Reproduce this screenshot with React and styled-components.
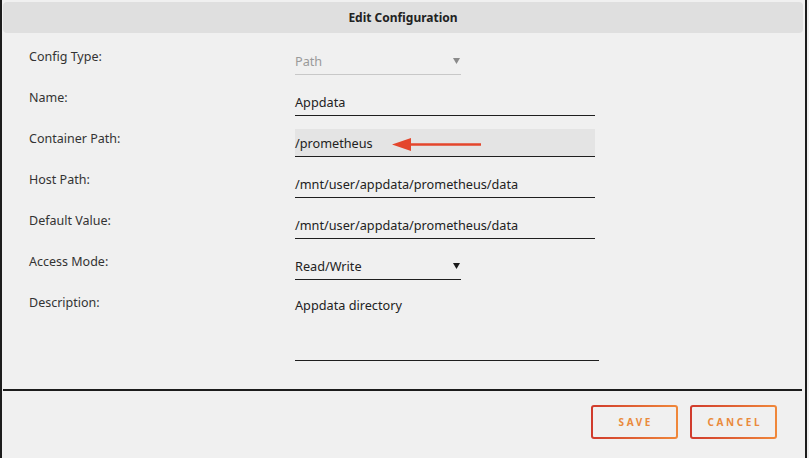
import React from 'react'
import styled, { createGlobalStyle } from 'styled-components'

const Global = createGlobalStyle`
  html, body {
    margin: 0;
    padding: 0;
    background: #f0f0f0;
  }
  body {
    font-family: "Noto Sans", "Open Sans", sans-serif;
    color: #222;
  }
`

const Dialog = styled.div`
  box-sizing: border-box;
  width: 807px;
  height: 458px;
  border-left: 2px solid #1c1c1c;
  border-right: 2px solid #1c1c1c;
  padding: 2px 2px 0 1px;
  background: #f0f0f0;
`

const Header = styled.div`
  height: 31px;
  border-radius: 4px;
  background: #dfdfdf;
  display: flex;
  align-items: center;
  justify-content: center;
  font-size: 12px;
  font-weight: 700;
  color: #222;
`

const Form = styled.div`
  display: flex;
  flex-direction: column;
  gap: 13px;
  padding: 14px 0 0 26px;
`

const Row = styled.div`
  display: grid;
  grid-template-columns: 266px auto;
  align-items: start;
`

const Label = styled.div`
  font-size: 12.5px;
  line-height: 20px;
  color: #333;
`

const Field = styled.div`
  position: relative;
  box-sizing: border-box;
  width: ${p => p.$w}px;
  height: ${p => p.$h || 28}px;
  display: flex;
  align-items: ${p => (p.$top ? 'flex-start' : 'center')};
  justify-content: space-between;
  padding: ${p => (p.$top ? '3px 0 0' : '1px 0 0')};
  border-bottom: 1px solid ${p => (p.$disabled ? '#c8c8c8' : '#1e1e1e')};
  background: ${p => (p.$focus ? '#e4e4e4' : 'transparent')};
  font-size: 12.7px;
  color: ${p => (p.$disabled ? '#9a9a9a' : '#222')};
`

const Caret = styled.svg`
  width: 7px;
  height: 6px;
  margin-right: 1px;
  fill: ${p => (p.$disabled ? '#8a8a8a' : '#1a1a1a')};
`

const Pointer = styled.svg`
  position: absolute;
  left: 97px;
  top: 8px;
  width: 90px;
  height: 14px;
`

const Divider = styled.div`
  height: 2px;
  margin: 28px 1px 0 0;
  background: #1c1c1c;
`

const Actions = styled.div`
  display: flex;
  justify-content: flex-end;
  gap: 12px;
  padding: 14px 26px 0 0;
`

const Button = styled.button`
  box-sizing: border-box;
  width: 87px;
  height: 34px;
  border: 2px solid transparent;
  border-radius: 3px;
  background:
    linear-gradient(#f0f0f0, #f0f0f0) padding-box,
    linear-gradient(90deg, #d03a2c, #f0883a) border-box;
  color: #ea8a3c;
  font-family: "Noto Sans", sans-serif;
  font-size: 10px;
  font-weight: 700;
  letter-spacing: 2.6px;
  text-indent: 2.6px;
  cursor: pointer;
`

const Select = ({ value, width, disabled }) => (
  <Field $w={width} $disabled={disabled}>
    <span>{value}</span>
    <Caret $disabled={disabled} viewBox="0 0 7 6">
      <path d="M0 0h7L3.5 6z" />
    </Caret>
  </Field>
)

export default function App() {
  return (
    <>
      <Global />
      <Dialog>
        <Header>Edit Configuration</Header>
        <Form>
          <Row>
            <Label>Config Type:</Label>
            <Select value="Path" width={166} disabled />
          </Row>
          <Row>
            <Label>Name:</Label>
            <Field $w={300}>Appdata</Field>
          </Row>
          <Row>
            <Label>Container Path:</Label>
            <Field $w={300} $focus>
              /prometheus
              <Pointer viewBox="0 0 90 14">
                <path d="M17 6.2h72v2.6H17z" fill="#e4462c" />
                <path d="M0 7.5L19 1v13z" fill="#e4462c" />
              </Pointer>
            </Field>
          </Row>
          <Row>
            <Label>Host Path:</Label>
            <Field $w={300}>/mnt/user/appdata/prometheus/data</Field>
          </Row>
          <Row>
            <Label>Default Value:</Label>
            <Field $w={300}>/mnt/user/appdata/prometheus/data</Field>
          </Row>
          <Row>
            <Label>Access Mode:</Label>
            <Select value="Read/Write" width={166} />
          </Row>
          <Row>
            <Label>Description:</Label>
            <Field $w={304} $h={68} $top>Appdata directory</Field>
          </Row>
        </Form>
        <Divider />
        <Actions>
          <Button>SAVE</Button>
          <Button>CANCEL</Button>
        </Actions>
      </Dialog>
    </>
  )
}
